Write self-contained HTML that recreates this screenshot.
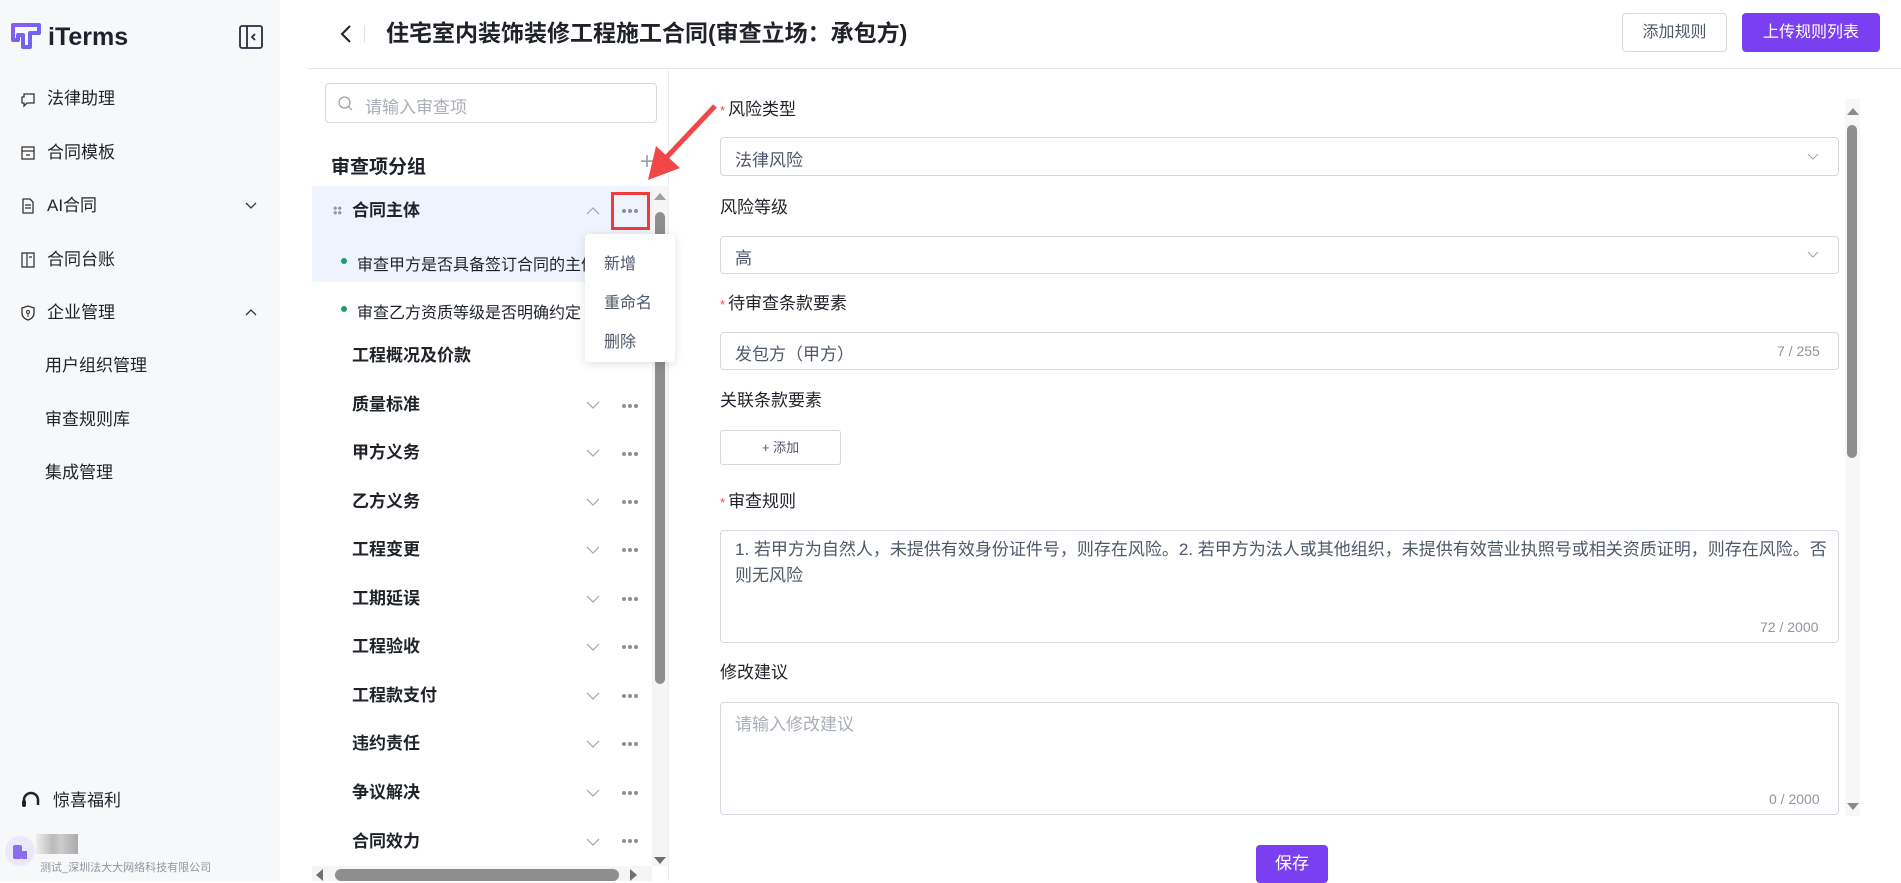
<!DOCTYPE html>
<html><head><meta charset="utf-8"><style>
*{box-sizing:border-box;margin:0;padding:0}
body{width:1901px;height:881px;overflow:hidden;background:#fff;font-family:"Liberation Sans","Noto Sans CJK SC",sans-serif;color:#1f2329;position:relative}
.a{position:absolute}
.side{left:0;top:0;width:280px;height:881px;background:#f7f8fa}
.mi{position:absolute;left:47px;font-size:17px;color:#1f2329;line-height:20px}
.ic{position:absolute;left:20px;width:16px;height:16px}
.grp{position:absolute;left:352px;font-size:17px;font-weight:bold;line-height:20px;color:#1f2329}
.chev{position:absolute;left:586px;width:14px;height:9px}
.dots{position:absolute;left:621px;width:18px;height:6px}
.lbl{position:absolute;left:720px;font-size:17px;color:#1f2329;line-height:20px}
.req{color:#f54a45;font-size:13px;margin-right:3px}
.box{position:absolute;left:720px;width:1119px;border:1px solid #d5d8de;border-radius:4px;background:#fff}
.cnt{position:absolute;font-size:14px;color:#8f959e}
</style></head><body>
<svg width="0" height="0" style="position:absolute"><defs><g id="d"><circle cx="3" cy="3" r="2" fill="#8a8f99"/><circle cx="9" cy="3" r="2" fill="#8a8f99"/><circle cx="15" cy="3" r="2" fill="#8a8f99"/></g></defs></svg>
<div class="a side"></div>
<svg class="a" style="left:10px;top:22px" width="32" height="27" viewBox="0 0 32 27"><defs><linearGradient id="g" x1="0" y1="0" x2="1" y2="1"><stop offset="0" stop-color="#8b5cf6"/><stop offset="1" stop-color="#6366f1"/></linearGradient></defs><path d="M3 3h26v8h-9v14h-7v-12h-5v5h-5z" fill="none" stroke="url(#g)" stroke-width="4" stroke-linejoin="round"/></svg>
<div class="a" style="left:48px;top:23px;font-size:25px;font-weight:bold;color:#1f2030">iTerms</div>
<svg class="a" style="left:239px;top:25px" width="24" height="24" viewBox="0 0 24 24"><rect x="1" y="1" width="22" height="22" rx="2" fill="none" stroke="#2b2b3a" stroke-width="1.8"/><line x1="8" y1="1" x2="8" y2="23" stroke="#2b2b3a" stroke-width="1.8"/><path d="M16 9l-3 3 3 3" fill="none" stroke="#2b2b3a" stroke-width="1.8"/></svg>
<svg class="ic" style="top:92px" viewBox="0 0 16 16"><path d="M4 2h10v9H7l-3 3V11H2V5h2z" fill="none" stroke="#333" stroke-width="1.3"/></svg><div class="mi" style="top:89px">法律助理</div>
<svg class="ic" style="top:145px" viewBox="0 0 16 16"><rect x="2" y="2" width="12" height="12" fill="none" stroke="#333" stroke-width="1.3"/><path d="M2 6h12M6 10h4" stroke="#333" stroke-width="1.3"/></svg><div class="mi" style="top:143px">合同模板</div>
<svg class="ic" style="top:198px" viewBox="0 0 16 16"><path d="M3 1h7l3 3v11H3z" fill="none" stroke="#333" stroke-width="1.3"/><path d="M5 7h6M5 10h6" stroke="#333" stroke-width="1.2"/></svg><div class="mi" style="top:196px">AI合同</div>
<svg class="a" style="left:245px;top:202px" width="12" height="8"><path d="M1 1l5 5 5-5" fill="none" stroke="#333" stroke-width="1.3"/></svg>
<svg class="ic" style="top:252px" viewBox="0 0 16 16"><rect x="2" y="1" width="12" height="14" fill="none" stroke="#333" stroke-width="1.3"/><path d="M7 1v14M9 5h3" stroke="#333" stroke-width="1.2"/></svg><div class="mi" style="top:250px">合同台账</div>
<svg class="ic" style="top:305px" viewBox="0 0 16 16"><path d="M8 1l6 2v5c0 4-3 6-6 7-3-1-6-3-6-7V3z" fill="none" stroke="#333" stroke-width="1.3"/><circle cx="8" cy="7" r="1.5" fill="none" stroke="#333"/><path d="M8 9v3" stroke="#333"/></svg><div class="mi" style="top:303px">企业管理</div>
<svg class="a" style="left:245px;top:308px" width="12" height="8"><path d="M1 7l5-5 5 5" fill="none" stroke="#333" stroke-width="1.3"/></svg>
<div class="mi" style="top:356px;left:45px">用户组织管理</div>
<div class="mi" style="top:410px;left:45px">审查规则库</div>
<div class="mi" style="top:463px;left:45px">集成管理</div>
<svg class="a" style="left:20px;top:791px" width="22" height="20" viewBox="0 0 22 20"><path d="M4 14V9a7 7 0 0 1 14 0v5" fill="none" stroke="#1f2030" stroke-width="2.5"/><rect x="2" y="9" width="4" height="7" rx="2" fill="#1f2030"/></svg>
<div class="mi" style="top:791px;left:53px">惊喜福利</div>
<div class="a" style="left:5px;top:836px;width:30px;height:30px;border-radius:50%;background:#ece8fb"></div>
<div class="a" style="left:13px;top:845px;width:9px;height:14px;background:#8b6cf0;border-radius:2px"></div>
<div class="a" style="left:22px;top:851px;width:5px;height:8px;background:#8b6cf0"></div>
<div class="a" style="left:36px;top:834px;width:42px;height:20px;background:linear-gradient(90deg,#eee,#bbb 40%,#ccc 60%,#aaa)"></div>
<div class="a" style="left:40px;top:859px;font-size:11px;color:#8f959e">测试_深圳法大大网络科技有限公司</div>

<svg class="a" style="left:340px;top:24px" width="12" height="20"><path d="M10 2l-8 8 8 8" fill="none" stroke="#1f2329" stroke-width="2"/></svg>
<div class="a" style="left:364px;top:25px;width:1px;height:18px;background:#dfe1e5"></div>
<div class="a" style="left:386px;top:18px;font-size:23px;font-weight:bold;line-height:30px">住宅室内装饰装修工程施工合同(审查立场：承包方)</div>
<div class="a" style="left:1622px;top:13px;width:105px;height:39px;border:1px solid #d5d8de;border-radius:4px;font-size:16px;color:#4e5969;text-align:center;line-height:37px">添加规则</div>
<div class="a" style="left:1742px;top:13px;width:138px;height:39px;background:#7b3ff2;border-radius:4px;font-size:16px;color:#fff;text-align:center;line-height:39px">上传规则列表</div>
<div class="a" style="left:308px;top:68px;width:1593px;height:1px;background:#e5e6eb"></div>
<div class="a" style="left:668px;top:69px;width:1px;height:812px;background:#ebedf0"></div>

<div class="a" style="left:325px;top:83px;width:332px;height:40px;border:1px solid #d5d8de;border-radius:4px"></div>
<svg class="a" style="left:338px;top:96px" width="15" height="15"><circle cx="6.5" cy="6.5" r="5.5" fill="none" stroke="#a0a4ab" stroke-width="1.3"/><path d="M10.5 10.5l3.5 3.5" stroke="#a0a4ab" stroke-width="1.3"/></svg>
<div class="a" style="left:365px;top:93px;font-size:17px;color:#a9aeb8">请输入审查项</div>
<div class="a" style="left:331px;top:152px;font-size:19px;font-weight:bold">审查项分组</div>
<div class="a" style="left:640px;top:150px;font-size:24px;color:#a0a4ab;font-weight:300;line-height:24px">+</div>
<div class="a" style="left:312px;top:186px;width:340px;height:96px;background:#eff3fd"></div>
<div class="a" style="left:333px;top:206px;width:9px;height:9px;background:radial-gradient(circle,#99a 1.6px,transparent 1.8px) 0 0/4.5px 4.5px"></div>
<div class="grp" style="top:201px">合同主体</div>
<svg class="chev" style="top:206px"><path d="M1 8l6-6 6 6" fill="none" stroke="#a0a4ab" stroke-width="1.2"/></svg>
<svg class="dots" style="top:208px"><use href="#d"/></svg>
<div class="a" style="left:611px;top:192px;width:39px;height:38px;border:3px solid #ef3b3b"></div>
<div class="a" style="left:341px;top:258px;width:6px;height:6px;border-radius:50%;background:#1f9e6e"></div>
<div class="a" style="left:357px;top:251px;font-size:16px;width:230px;overflow:hidden;white-space:nowrap">审查甲方是否具备签订合同的主体资格</div>
<div class="a" style="left:341px;top:306px;width:6px;height:6px;border-radius:50%;background:#1f9e6e"></div>
<div class="a" style="left:357px;top:299px;font-size:16px;width:230px;overflow:hidden;white-space:nowrap">审查乙方资质等级是否明确约定</div>
<div class="grp" style="top:346px">工程概况及价款</div>

<div class="grp" style="top:395px">质量标准</div><svg class="chev" style="top:401px"><path d="M1 1l6 6 6-6" fill="none" stroke="#a0a4ab" stroke-width="1.2"/></svg><svg class="dots" style="top:403px"><use href="#d"/></svg>
<div class="grp" style="top:443px">甲方义务</div><svg class="chev" style="top:449px"><path d="M1 1l6 6 6-6" fill="none" stroke="#a0a4ab" stroke-width="1.2"/></svg><svg class="dots" style="top:451px"><use href="#d"/></svg>
<div class="grp" style="top:492px">乙方义务</div><svg class="chev" style="top:498px"><path d="M1 1l6 6 6-6" fill="none" stroke="#a0a4ab" stroke-width="1.2"/></svg><svg class="dots" style="top:499px"><use href="#d"/></svg>
<div class="grp" style="top:540px">工程变更</div><svg class="chev" style="top:546px"><path d="M1 1l6 6 6-6" fill="none" stroke="#a0a4ab" stroke-width="1.2"/></svg><svg class="dots" style="top:547px"><use href="#d"/></svg>
<div class="grp" style="top:589px">工期延误</div><svg class="chev" style="top:595px"><path d="M1 1l6 6 6-6" fill="none" stroke="#a0a4ab" stroke-width="1.2"/></svg><svg class="dots" style="top:596px"><use href="#d"/></svg>
<div class="grp" style="top:637px">工程验收</div><svg class="chev" style="top:643px"><path d="M1 1l6 6 6-6" fill="none" stroke="#a0a4ab" stroke-width="1.2"/></svg><svg class="dots" style="top:644px"><use href="#d"/></svg>
<div class="grp" style="top:686px">工程款支付</div><svg class="chev" style="top:692px"><path d="M1 1l6 6 6-6" fill="none" stroke="#a0a4ab" stroke-width="1.2"/></svg><svg class="dots" style="top:693px"><use href="#d"/></svg>
<div class="grp" style="top:734px">违约责任</div><svg class="chev" style="top:740px"><path d="M1 1l6 6 6-6" fill="none" stroke="#a0a4ab" stroke-width="1.2"/></svg><svg class="dots" style="top:741px"><use href="#d"/></svg>
<div class="grp" style="top:783px">争议解决</div><svg class="chev" style="top:789px"><path d="M1 1l6 6 6-6" fill="none" stroke="#a0a4ab" stroke-width="1.2"/></svg><svg class="dots" style="top:790px"><use href="#d"/></svg>
<div class="grp" style="top:832px">合同效力</div><svg class="chev" style="top:838px"><path d="M1 1l6 6 6-6" fill="none" stroke="#a0a4ab" stroke-width="1.2"/></svg><svg class="dots" style="top:838px"><use href="#d"/></svg>

<div class="a" style="left:652px;top:186px;width:16px;height:680px;background:#f5f5f5"></div>
<svg class="a" style="left:654px;top:192px" width="12" height="8"><path d="M0 8l6-7 6 7z" fill="#a0a0a0"/></svg>
<div class="a" style="left:655px;top:212px;width:10px;height:472px;border-radius:5px;background:#8e8e8e"></div>
<svg class="a" style="left:654px;top:857px" width="12" height="8"><path d="M0 0l6 7 6-7z" fill="#707070"/></svg>
<div class="a" style="left:312px;top:866px;width:340px;height:15px;background:#f5f5f5"></div>
<svg class="a" style="left:315px;top:869px" width="8" height="12"><path d="M8 0L1 6l7 6z" fill="#707070"/></svg>
<div class="a" style="left:335px;top:869px;width:284px;height:12px;border-radius:6px;background:#8e8e8e"></div>
<svg class="a" style="left:630px;top:869px" width="8" height="12"><path d="M0 0l7 6-7 6z" fill="#707070"/></svg>

<div class="a" style="left:585px;top:234px;width:90px;height:128px;background:#fff;border-radius:4px;box-shadow:0 2px 10px rgba(0,0,0,.12)"></div>
<div class="a" style="left:604px;top:250px;font-size:16px;color:#4e5969">新增</div>
<div class="a" style="left:604px;top:289px;font-size:16px;color:#4e5969">重命名</div>
<div class="a" style="left:604px;top:328px;font-size:16px;color:#4e5969">删除</div>

<svg class="a" style="left:640px;top:100px" width="80" height="90"><path d="M75 6L24 60" stroke="#f04848" stroke-width="5"/><path d="M8 80l8-34 24 22z" fill="#f04848"/></svg>

<div class="lbl" style="top:100px"><span class="req">*</span>风险类型</div>
<div class="box" style="top:137px;height:39px"></div>
<div class="a" style="left:735px;top:146px;font-size:17px;color:#4e5969">法律风险</div>
<svg class="a" style="left:1807px;top:153px" width="12" height="7"><path d="M1 1l5 5 5-5" fill="none" stroke="#a0a4ab"/></svg>
<div class="lbl" style="top:198px">风险等级</div>
<div class="box" style="top:236px;height:38px"></div>
<div class="a" style="left:735px;top:244px;font-size:17px;color:#4e5969">高</div>
<svg class="a" style="left:1807px;top:251px" width="12" height="7"><path d="M1 1l5 5 5-5" fill="none" stroke="#a0a4ab"/></svg>
<div class="lbl" style="top:294px"><span class="req">*</span>待审查条款要素</div>
<div class="box" style="top:332px;height:38px"></div>
<div class="a" style="left:735px;top:340px;font-size:17px;color:#4e5969">发包方（甲方）</div>
<div class="cnt" style="left:1777px;top:343px">7 / 255</div>
<div class="lbl" style="top:391px">关联条款要素</div>
<div class="a" style="left:720px;top:430px;width:121px;height:35px;border:1px solid #d5d8de;border-radius:3px;font-size:13px;color:#4e5969;text-align:center;line-height:33px">+ 添加</div>
<div class="lbl" style="top:492px"><span class="req">*</span>审查规则</div>
<div class="box" style="top:530px;height:113px"></div>
<div class="a" style="left:735px;top:537px;width:1100px;font-size:17px;color:#4e5969;line-height:26px;white-space:nowrap">1. 若甲方为自然人，未提供有效身份证件号，则存在风险。2. 若甲方为法人或其他组织，未提供有效营业执照号或相关资质证明，则存在风险。否<br>则无风险</div>
<div class="cnt" style="left:1760px;top:619px">72 / 2000</div>
<div class="lbl" style="top:663px">修改建议</div>
<div class="box" style="top:702px;height:113px"></div>
<div class="a" style="left:735px;top:710px;font-size:17px;color:#a9aeb8">请输入修改建议</div>
<div class="cnt" style="left:1769px;top:791px">0 / 2000</div>
<div class="a" style="left:1256px;top:845px;width:72px;height:38px;background:#7b3ff2;border-radius:4px;color:#fff;font-size:17px;text-align:center;line-height:38px">保存</div>
<div class="a" style="left:1845px;top:99px;width:15px;height:717px;background:#f7f7f7"></div>
<svg class="a" style="left:1847px;top:107px" width="12" height="8"><path d="M0 8l6-7 6 7z" fill="#8a8a8a"/></svg>
<div class="a" style="left:1847px;top:125px;width:10px;height:333px;border-radius:5px;background:#8e8e8e"></div>
<svg class="a" style="left:1847px;top:803px" width="12" height="8"><path d="M0 0l6 7 6-7z" fill="#8a8a8a"/></svg>
</body></html>
